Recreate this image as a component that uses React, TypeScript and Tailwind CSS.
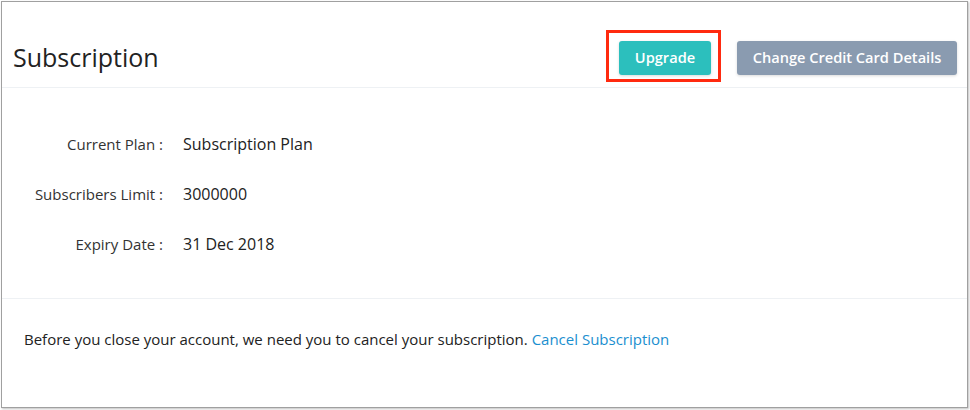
const rows = [
  { label: "Current Plan :", value: "Subscription Plan" },
  { label: "Subscribers Limit :", value: "3000000" },
  { label: "Expiry Date :", value: "31 Dec 2018" },
];

export default function App() {
  return (
    <div className="w-[970px] h-[410px] bg-white pl-[1px] pt-[1px] font-['Open_Sans',sans-serif]">
      <div className="w-[967px] h-[407px] border border-[#a0a0a0] shadow-[1px_1px_2px_rgba(0,0,0,0.25)] flex flex-col">
        {/* Header */}
        <div className="h-[86px] pt-[26px] pl-[11px] pr-[10px] flex items-center justify-between border-b border-[#eef1f4]">
          <h1 className="text-[25px] text-[#222] leading-none">Subscription</h1>
          <div className="flex items-center gap-[26px]">
            <div className="relative">
              <button className="w-[92px] h-[34px] rounded-[3px] bg-[#2cbfbd] text-white text-[14.6px] font-semibold shadow-[0_1px_3px_rgba(0,0,0,0.15)]">
                Upgrade
              </button>
              <div className="absolute -left-[13px] -top-[11px] -right-[10px] -bottom-[7px] border-[3px] border-[#ff2a0f]"></div>
            </div>
            <button className="w-[220px] h-[34px] rounded-[3px] bg-[#8a9bb0] text-white text-[14.6px] font-semibold shadow-[0_1px_3px_rgba(0,0,0,0.15)]">
              Change Credit Card Details
            </button>
          </div>
        </div>

        {/* Plan details */}
        <div className="pt-[31px] pb-[29px] border-b border-[#eef1f4]">
          {rows.map((r) => (
            <div key={r.label} className="h-[50px] flex items-center text-[#333]">
              <div className="w-[161px] text-right text-[15px]">{r.label}</div>
              <div className="ml-[20px] text-[16px] text-[#222]">{r.value}</div>
            </div>
          ))}
        </div>

        {/* Cancel notice */}
        <div className="pt-[30px] pl-[22px] text-[15px] leading-[20px] text-[#222]">
          Before you close your account, we need you to cancel your subscription.{" "}
          <a href="#" className="text-[#1b8fcf]">
            Cancel Subscription
          </a>
        </div>
      </div>
    </div>
  );
}
